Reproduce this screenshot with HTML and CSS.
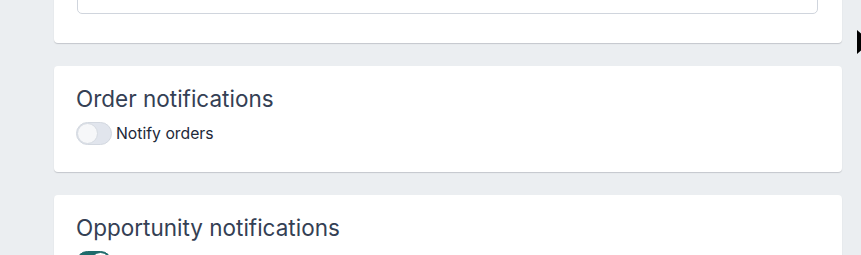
FILE: index.html
```html
<!DOCTYPE html>
<html lang="en">
<head>
<meta charset="utf-8">
<title>Notifications</title>
<link rel="stylesheet" href="styles.css">
</head>
<body>
<div class="page">
  <div class="stack">
    <section class="card card-first">
      <div class="input-box"></div>
    </section>
    <section class="card">
      <h2 class="card-title">Order notifications</h2>
      <label class="toggle-row">
        <span class="toggle"><span class="thumb"></span></span>
        <span class="toggle-label">Notify orders</span>
      </label>
    </section>
    <section class="card">
      <h2 class="card-title">Opportunity notifications</h2>
      <label class="toggle-row">
        <span class="toggle toggle-on"><span class="thumb"></span></span>
        <span class="toggle-label">Notify opportunities</span>
      </label>
    </section>
  </div>
  <span class="edge-arrow"></span>
</div>
</body>
</html>
```
FILE: styles.css
```css
html, body {
  margin: 0;
  padding: 0;
  background: #ebeef1;
  overflow: hidden;
  height: 100%;
}
body {
  font-family: Inter, "Noto Sans", sans-serif;
}
.page {
  position: relative;
  display: flow-root;
  height: 100%;
}
.stack {
  width: 788px;
  margin: -50px 0 0 54px;
  display: flex;
  flex-direction: column;
  gap: 23px;
}
.card {
  background: #ffffff;
  border-radius: 4px;
  box-shadow: 0 1px 1px rgba(16, 24, 40, 0.18);
  padding: 18px 22px 27px 22px;
}
.card-first {
  padding: 24px 24px 29px 23px;
}
.input-box {
  height: 40px;
  border: 1px solid #d0d5dd;
  border-radius: 5px;
  box-sizing: border-box;
}
.card-title {
  margin: 0;
  font-size: 22.5px;
  line-height: 30px;
  font-weight: 400;
  color: #344054;
}
.toggle-row {
  display: flex;
  align-items: center;
  gap: 4px;
  margin-top: 8px;
}
.toggle {
  width: 36px;
  height: 23px;
  box-sizing: border-box;
  border-radius: 12px;
  background: #e1e5ed;
  border: 1px solid #d3d8e0;
  position: relative;
  flex: none;
}
.thumb {
  position: absolute;
  top: 0;
  left: 0;
  width: 21px;
  height: 21px;
  box-sizing: border-box;
  border-radius: 50%;
  background: #f6f7f9;
  border: 1px solid #d6dbe2;
}
.toggle-on {
  background: #1e6b6b;
  border-color: #1e6b6b;
}
.toggle-on .thumb {
  left: 13px;
  background: #ffffff;
  border-color: #1e6b6b;
}
.toggle-label {
  font-size: 15.75px;
  line-height: 22px;
  color: #1d2939;
}
.edge-arrow {
  position: absolute;
  left: 857px;
  top: 30px;
  width: 0;
  height: 0;
  border-left: 14px solid #000;
  border-top: 12px solid transparent;
  border-bottom: 12px solid transparent;
}
```
